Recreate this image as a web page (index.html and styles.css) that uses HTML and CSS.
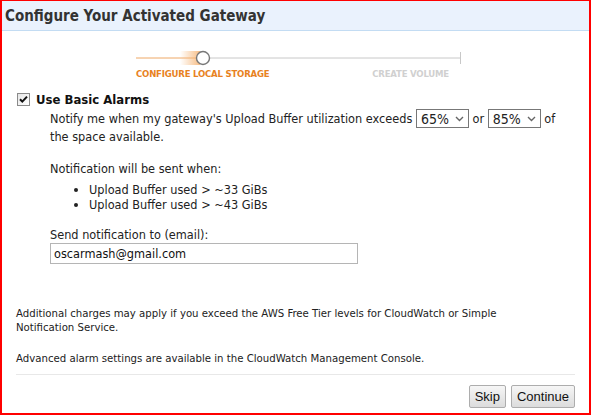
FILE: index.html
```html
<!DOCTYPE html>
<html lang="en">
<head>
  <meta charset="UTF-8">
  <title>Configure Your Activated Gateway</title>
  <link rel="stylesheet" href="styles.css">
</head>
<body>
  <div class="dialog">
    <div class="dialog-header">
      <h1>Configure Your Activated Gateway</h1>
    </div>

    <div class="dialog-body">
      <div class="steps">
        <svg class="steps-track" width="330" height="16" viewBox="0 0 330 16">
          <defs>
            <linearGradient id="glow" x1="0" x2="1" y1="0" y2="0">
              <stop offset="0" stop-color="#f6b77a" stop-opacity="0"/>
              <stop offset="1" stop-color="#f6b77a" stop-opacity="0.9"/>
            </linearGradient>
          </defs>
          <line x1="0" y1="8" x2="62" y2="8" stroke="#eea866" stroke-width="1"/>
          <rect x="44" y="1" width="20" height="14" fill="url(#glow)"/>
          <line x1="74" y1="8" x2="324" y2="8" stroke="#c8c8c8" stroke-width="1"/>
          <line x1="324.5" y1="2" x2="324.5" y2="14" stroke="#c8c8c8" stroke-width="1"/>
          <circle cx="67" cy="8" r="6.5" fill="#fff" stroke="#777" stroke-width="1.4"/>
        </svg>
        <div class="steps-labels">
          <span class="step active">CONFIGURE LOCAL STORAGE</span>
          <span class="step">CREATE VOLUME</span>
        </div>
      </div>

      <label class="check">
        <input type="checkbox" checked>
        <span class="check-box">
          <svg width="11" height="11" viewBox="0 0 11 11">
            <path d="M2 5.2 L4.3 7.6 L9 2.6" fill="none" stroke="#111" stroke-width="2"/>
          </svg>
        </span>
        <span>Use Basic Alarms</span>
      </label>

      <div class="alarm-options">
        <p>
          Notify me when my gateway's Upload Buffer utilization exceeds
          <span class="pct"><select><option>65%</option></select><svg class="pct-arrow" width="9" height="6" viewBox="0 0 9 6"><path d="M1 1 L4.5 4.5 L8 1" fill="none" stroke="#666" stroke-width="1.4"/></svg></span>
          or
          <span class="pct"><select><option>85%</option></select><svg class="pct-arrow" width="9" height="6" viewBox="0 0 9 6"><path d="M1 1 L4.5 4.5 L8 1" fill="none" stroke="#666" stroke-width="1.4"/></svg></span>
          of the space available.
        </p>

        <p>Notification will be sent when:</p>
        <ul>
          <li>Upload Buffer used &gt; ~33 GiBs</li>
          <li>Upload Buffer used &gt; ~43 GiBs</li>
        </ul>

        <label class="email-label" for="email">Send notification to (email):</label>
        <input type="text" id="email" value="oscarmash@gmail.com">
      </div>

      <p class="note">Additional charges may apply if you exceed the AWS Free Tier levels for CloudWatch or Simple Notification Service.</p>
      <p class="note">Advanced alarm settings are available in the CloudWatch Management Console.</p>

      <div class="actions">
        <button>Skip</button>
        <button>Continue</button>
      </div>
    </div>
  </div>
</body>
</html>
```

FILE: styles.css
```css
* {
  box-sizing: border-box;
}

html, body {
  margin: 0;
  height: 100%;
}

body {
  font-family: "DejaVu Sans Condensed", "DejaVu Sans", sans-serif;
  font-size: 12.6px;
  color: #222;
  background: #fff;
}

.dialog {
  height: 415px;
  border: 2px solid #ff0000;
  border-top-width: 1px;
}

.dialog-header {
  height: 30px;
  background: #eaf2fd;
  border-bottom: 1px solid #c3dcf3;
  padding: 0 0 0 3px;
  display: flex;
  align-items: center;
}

.dialog-header h1 {
  margin: 0;
  font-family: "DejaVu Sans Condensed", "DejaVu Sans", sans-serif;
  font-size: 15px;
  font-weight: bold;
  color: #333;
}

.dialog-body {
  padding: 0 14px 0 14px;
}

.steps {
  margin: 19px 0 0 120px;
  width: 330px;
}

.steps-track {
  display: block;
}

.steps-labels {
  display: flex;
  justify-content: space-between;
  margin-top: 2px;
  padding-right: 17px;
  font-size: 9.5px;
  font-weight: bold;
  letter-spacing: -0.2px;
}

.step {
  color: #d0d0d0;
}

.step.active {
  color: #e8821e;
}

.check {
  display: flex;
  align-items: center;
  gap: 6px;
  margin-top: 13px;
  font-weight: bold;
  font-size: 13px;
  color: #111;
}

.check input {
  display: none;
}

.check-box {
  width: 13px;
  height: 13px;
  margin-left: 1px;
  border: 1px solid #8a8a8a;
  background: linear-gradient(135deg, #e6e6e6, #fff);
  display: flex;
  align-items: center;
  justify-content: center;
}

.alarm-options {
  padding-left: 34px;
  padding-right: 10px;
}

.alarm-options p {
  margin: 3px 0 0;
  line-height: 18px;
}

.alarm-options p + p {
  margin-top: 14px;
}

.pct {
  position: relative;
  display: inline-block;
  vertical-align: middle;
  margin-top: -2px;
}

.pct select {
  appearance: none;
  -webkit-appearance: none;
  display: block;
  width: 53px;
  height: 19px;
  font-family: inherit;
  font-size: 14px;
  color: #222;
  border: 1px solid #777;
  border-radius: 0;
  padding: 0 0 0 4px;
  background: #fff;
}

.pct-arrow {
  position: absolute;
  right: 5px;
  top: 7px;
  pointer-events: none;
}

ul {
  margin: 4px 0 0;
  padding-left: 39px;
}

ul li {
  line-height: 15px;
}

.email-label {
  display: block;
  margin-top: 15px;
  line-height: 16px;
}

#email {
  display: block;
  margin-top: 0;
  width: 308px;
  height: 21px;
  border: 1px solid #b5b5b5;
  padding: 0 3px;
  font-family: inherit;
  font-size: 12.6px;
  color: #111;
}

.note {
  margin: 0;
  max-width: 540px;
  font-size: 11.3px;
  line-height: 14px;
}

.alarm-options + .note {
  margin-top: 43px;
}

.note + .note {
  margin-top: 17px;
}

.actions {
  margin-top: 8px;
  border-top: 1px solid #e8e8e8;
  padding-top: 10px;
  display: flex;
  justify-content: flex-end;
  gap: 5px;
}

.actions button {
  font-family: "Liberation Sans", Arial, sans-serif;
  font-size: 13px;
  height: 23px;
  padding: 0 5px;
  border: 1px solid #adadad;
  border-radius: 2px;
  background: linear-gradient(#f6f6f6, #dcdcdc);
  color: #111;
}
```
